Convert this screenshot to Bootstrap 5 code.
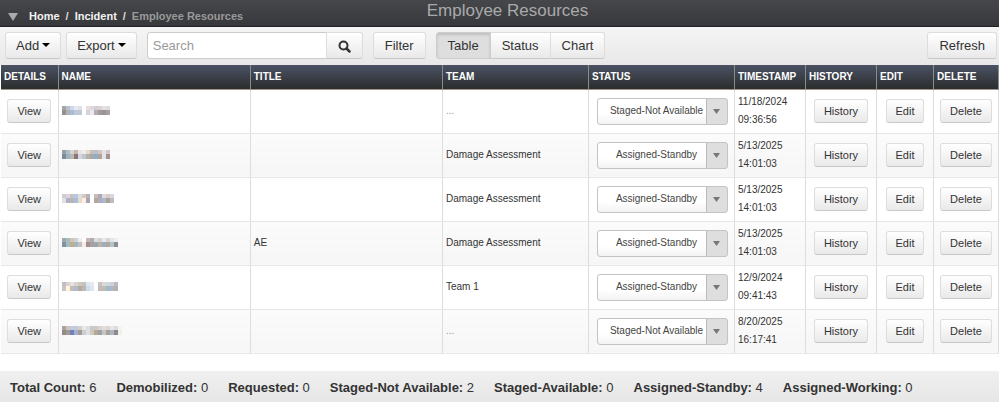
<!DOCTYPE html>
<html lang="en">
<head>
<meta charset="utf-8">
<meta name="viewport" content="width=device-width, initial-scale=1">
<title>Employee Resources</title>
<link href="https://cdn.jsdelivr.net/npm/bootstrap@5.3.0/dist/css/bootstrap.min.css" rel="stylesheet">
<style>
body{font-family:"Liberation Sans",Arial,sans-serif;font-size:13px;line-height:18px;color:#333;background:#fff}
.top-bar{height:27px;background:linear-gradient(#45474b,#37383b);border-bottom:1px solid #222;font-size:11px;font-weight:700}
.top-bar h1{font-size:17px;line-height:22px;color:#a9aaab;font-weight:400;padding-left:16px}
.crumbs{padding:8px 0 0 8px;line-height:16px}
.crumbs .breadcrumb{--bs-breadcrumb-divider-color:#ddd;--bs-breadcrumb-item-padding-x:6px}
.crumbs a{color:#f2f2f2}
.crumbs .active{color:#999}
.crumbs svg{margin:5px 11px 0 0}
.tools{padding:5px 2px 6px 5px;gap:0 10px;background:linear-gradient(#f5f5f5,#e8e8e8)}
.btn-pair{gap:5px}
.btn-soft{--bs-btn-color:#333;--bs-btn-border-color:#ddd;--bs-btn-hover-border-color:#bbb;--bs-btn-active-border-color:#ccc;--bs-btn-active-color:#333;--bs-btn-font-size:13px;--bs-btn-line-height:19px;--bs-btn-padding-y:3px;--bs-btn-padding-x:11px;--bs-btn-border-radius:3px;background:linear-gradient(#fff,#e9e9e9);border-bottom-color:#c8c8c8}
.btn-soft.active{background:#dedede;box-shadow:inset 0 2px 3px #0002}
.btn-soft.dropdown-toggle{--bs-btn-padding-x:10px}
.btn-soft.dropdown-toggle::after{margin-left:3px;vertical-align:3px;border-width:4px 4px 0;color:#000}
.btn-row{--bs-btn-font-size:11px;--bs-btn-line-height:18px;--bs-btn-padding-y:2px;--bs-btn-padding-x:9px}
.search-box{width:216px}
.search-box .form-control{font-size:13px;line-height:19px;min-height:27px;padding:3px 5px;border-color:#ccc;border-radius:3px}
.search-box .form-control::placeholder{color:#999}
.grid-wrap{padding-left:1px}
.grid-table{table-layout:fixed;font-size:10px}
.grid-table th{height:24px;padding:0 0 0 3px;line-height:18px;vertical-align:middle;color:#fff;background:linear-gradient(#4a5264,#2b2d2d);border:0;border-right:1px solid #8b8b88;border-bottom:1px solid #9d958a}
.grid-table td{height:44px;padding:0 0 0 3px;color:#333;border:0;border-right:1px solid #ddd;border-bottom:1px solid #e6e6e6;line-height:18px;vertical-align:middle}
.grid-table tbody tr:nth-child(even) td{background:linear-gradient(#fbfbfb,#f6f6f6)}
.grid-table td.act{padding:0;text-align:center}
.grid-table td.no-team{color:#999}
.w-details{width:57px}.w-status{width:146px}.w-time{width:71px}.w-edit{width:57px}.w-del{width:65px}
.status-pick{width:131px;height:27px;margin-left:5px;padding:2px 22px 2px 10px;font-size:10px;text-align:center;text-align-last:center;color:#444;border:1px solid #c4c4c4;border-radius:3px;appearance:none;background:url("data:image/svg+xml,%3Csvg xmlns='http://www.w3.org/2000/svg' width='21' height='25'%3E%3Cpath fill='%23dedede' d='M0 0h21v25H0z'/%3E%3Cpath fill='%23bbb' d='M0 0h1v25H0z'/%3E%3Cpath fill='%23777' d='M7 10h7l-3.500 5z'/%3E%3C/svg%3E") right center no-repeat,linear-gradient(#fff 60%,#f3f3f3)}
.totals{margin-top:17px;padding:8px 10px 7px;font-size:13px;line-height:17px;gap:0 20px;background:linear-gradient(#f0f0f0,#e6e6e6)}
</style>
<script src="https://cdn.jsdelivr.net/npm/bootstrap@5.3.0/dist/js/bootstrap.bundle.min.js"></script>
</head>
<body>
<header class="top-bar position-relative">
<nav class="d-flex crumbs" aria-label="breadcrumb">
<svg width="10" height="8" aria-hidden="true"><path fill="#aaa" d="M0 0h10L5 8z"/></svg>
<ol class="breadcrumb mb-0"><li class="breadcrumb-item"><a class="text-decoration-none" href="#">Home</a></li><li class="breadcrumb-item"><a class="text-decoration-none" href="#">Incident</a></li><li class="breadcrumb-item active" aria-current="page">Employee Resources</li></ol>
</nav>
<h1 class="position-absolute top-0 start-50 translate-middle-x mb-0 text-nowrap">Employee Resources</h1>
</header>
<div class="tools d-flex align-items-center" role="toolbar" aria-label="Resource tools">
<div class="d-flex btn-pair">
<button type="button" class="btn btn-soft dropdown-toggle">Add</button>
<button type="button" class="btn btn-soft dropdown-toggle">Export</button>
</div>
<form class="input-group flex-nowrap search-box">
<input type="search" class="form-control" placeholder="Search" aria-label="Search">
<button type="button" class="btn btn-soft" aria-label="Run search"><svg width="13" height="13" viewBox="0 0 13 13" fill="none" stroke="#333" aria-hidden="true"><circle cx="5.500" cy="5.500" r="4" stroke-width="2"/><path d="M8.500 8.500l3 3" stroke-width="2.500" stroke-linecap="round"/></svg></button>
</form>
<button type="button" class="btn btn-soft">Filter</button>
<div class="btn-group" role="group" aria-label="View">
<button type="button" class="btn btn-soft active" aria-pressed="true">Table</button>
<button type="button" class="btn btn-soft">Status</button>
<button type="button" class="btn btn-soft">Chart</button>
</div>
<button type="button" class="btn btn-soft ms-auto">Refresh</button>
</div>
<main class="grid-wrap">
<table class="table grid-table mb-0">
<thead><tr><th class="w-details">DETAILS</th><th>NAME</th><th>TITLE</th><th class="w-status">TEAM</th><th class="w-status">STATUS</th><th class="w-time">TIMESTAMP</th><th class="w-time">HISTORY</th><th class="w-edit">EDIT</th><th class="w-del">DELETE</th></tr></thead>
<tbody id="people"></tbody>
</table>
</main>
<footer class="totals d-flex flex-wrap">
<div><b>Total Count:</b> 6</div><div><b>Demobilized:</b> 0</div><div><b>Requested:</b> 0</div><div><b>Staged-Not Available:</b> 2</div><div><b>Staged-Available:</b> 0</div><div><b>Assigned-Standby:</b> 4</div><div><b>Assigned-Working:</b> 0</div>
</footer>
<script>
// Names are hidden behind a mosaic: each entry holds rows of 4px blocks.
const people = [
  {mask: ['a9a4a4 b9c0d0 cfd8ea e8eaf0 e0e0e8 fff e8dedb dcd8e0 d5cdd3 d8d2d5 e5e1e1 ddd', '8e9199 b5b1ae a9bdd8 c3c7d6 bfc9dc fff d9d3d8 e8e8ef b5aeae a7989c 96939b a8a0a0'], title: '', team: '...', status: 0, date: '11/18/2024', time: '09:36:56'},
  {mask: ['91a1ab aebdca d5d4cf c9b3ad e8e5e7 eee e5d8cd c9bdb4 b8c0ca d2c6be e7e1e5 cfc8c8', '7d8b93 9eb2c6 b9b9b2 8f7573 ccd8e8 c5c5c5 b1b2ad a9a8a4 8caeca b3a297 e3e5e8 a3938f'], title: '', team: 'Damage Assessment', status: 1, date: '5/13/2025', time: '14:01:03'},
  {mask: ['cfcdd2 d9d4de c8c3c3 bac5de d7dfe9 d8c9bb b6b3be fff c6bdb9 b1a9b2 d9dce4 d9ccc4 d8d7e1', 'e2dfe4 b2b1c0 b8b3b7 a8bdd9 e7dcc8 fff0dd a8a4b3 fff b5a79d b2acb7 a5bad5 b59f8d b9bbc7'], title: '', team: 'Damage Assessment', status: 1, date: '5/13/2025', time: '14:01:03'},
  {mask: ['9ba9ad a8bcc0 d3c5ad cad4d8 eee fff c8b6b1 aeadae ddd d6d3d1 e6eaed d6d5d2 e7e6e4 eee', '819499 a2bbc7 c4ad88 9fb6c5 c7c0bd eee a98d88 a3a3a3 a0a5aa b7b4b0 9eaebc b1a89d b0c5cc 8e8d91'], title: 'AE', team: 'Damage Assessment', status: 1, date: '5/13/2025', time: '14:01:03'},
  {mask: ['c4bfc2 d7d4d1 e6e2dd d8d3cc d0c8be c4c1c1 dce7ef e6eaf0 fff c5c3c3 ddd8d1 ced8df ccd3d9 bfbabd', 'ccc4c3 fff4dd c7bbb0 a9bed0 b6aaa0 bab8b9 cfdce6 dfe6ec fff c0bab8 c4bab0 9cbbc8 b6b3c4 b8afb0'], title: '', team: 'Team 1', status: 1, date: '12/9/2024', time: '09:41:43'},
  {mask: ['ada198 c9c4bd c6cadd c3cbd8 d4cfc8 e8e8e8 dedede c2c9d2 d3c9bf d3d5d8 e0dcdb ded7d0 e7e7e7 dcdcdc f4f4f4', '928b89 a69b90 7281bd a4b1d0 a69c93 c9cfd8 e0e0e0 d1c9b9 b6a894 9ea3a8 c7c5c2 a5a39f b0b4bb 8d8992 f2eee8'], title: '', team: '...', status: 0, date: '8/20/2025', time: '16:17:41'}
];
const states = ['Staged-Not Available', 'Assigned-Standby'];
const mosaic = rows => `<svg class="d-block" width="60" height="10" role="img" aria-label="Name hidden">${rows.map((r, y) => r.split(' ').map((c, x) => `<rect x="${x * 4}" y="${y * 4}" width="4" height="${4 + y}" fill="#${c}"/>`).join('')).join('')}</svg>`;
const button = label => `<td class="act"><button type="button" class="btn btn-soft btn-row">${label}</button></td>`;
document.getElementById('people').innerHTML = people.map(p => `<tr>${button('View')}<td>${mosaic(p.mask)}</td><td>${p.title}</td><td${p.team === '...' ? ' class="no-team"' : ''}>${p.team}</td><td><select class="status-pick" aria-label="Status">${states.map((s, i) => `<option${i === p.status ? ' selected' : ''}>${s}</option>`).join('')}</select></td><td>${p.date}<br>${p.time}</td>${button('History')}${button('Edit')}${button('Delete')}</tr>`).join('');
</script>
</body>
</html>
